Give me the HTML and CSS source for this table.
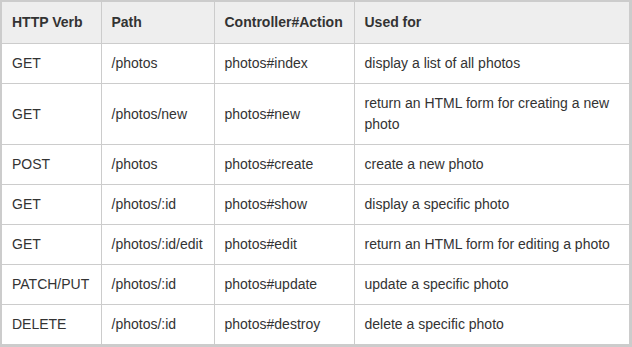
FILE: index.html
```html
<!DOCTYPE html>
<html>
<head>
<meta charset="utf-8">
<link rel="stylesheet" href="styles.css">
</head>
<body>
<div class="frame">
<table class="routes">
  <colgroup>
    <col class="c1"><col class="c2"><col class="c3"><col class="c4">
  </colgroup>
  <thead>
    <tr><th>HTTP Verb</th><th>Path</th><th>Controller#Action</th><th>Used for</th></tr>
  </thead>
  <tbody>
    <tr><td>GET</td><td>/photos</td><td>photos#index</td><td>display a list of all photos</td></tr>
    <tr><td>GET</td><td>/photos/new</td><td>photos#new</td><td>return an HTML form for creating a new photo</td></tr>
    <tr><td>POST</td><td>/photos</td><td>photos#create</td><td>create a new photo</td></tr>
    <tr><td>GET</td><td>/photos/:id</td><td>photos#show</td><td>display a specific photo</td></tr>
    <tr><td>GET</td><td>/photos/:id/edit</td><td>photos#edit</td><td>return an HTML form for editing a photo</td></tr>
    <tr><td>PATCH/PUT</td><td>/photos/:id</td><td>photos#update</td><td>update a specific photo</td></tr>
    <tr><td>DELETE</td><td>/photos/:id</td><td>photos#destroy</td><td>delete a specific photo</td></tr>
  </tbody>
</table>
</div>
</body>
</html>
```
FILE: styles.css
```css
html, body {
  margin: 0;
  padding: 0;
  background: #fff;
}
.frame {
  width: 632px;
  box-sizing: border-box;
  border-top: 2px solid #ccc;
  border-left: 2px solid #ccc;
  border-right: 3px solid #ccc;
  border-bottom: 3px solid #ccc;
  overflow: hidden;
}
.routes {
  border-collapse: collapse;
  width: 627px;
  table-layout: fixed;
  font-family: "Liberation Sans", Arial, sans-serif;
  font-size: 14px;
  line-height: 21px;
  color: #333;
}
.c1 { width: 99px; }
.c2 { width: 113px; }
.c3 { width: 140px; }
.c4 { width: 275px; }
.routes th, .routes td {
  border: 1px solid #ccc;
  padding: 9px 10px;
  text-align: left;
  vertical-align: middle;
}
.routes th {
  background: #eee;
  font-weight: bold;
  padding-top: 10px;
  padding-bottom: 10px;
}
.routes tr > :first-child { border-left: 0; }
.routes tr > :last-child { border-right: 0; }
.routes thead tr > * { border-top: 0; }
.routes tbody tr:last-child > * { border-bottom: 0; }
```
